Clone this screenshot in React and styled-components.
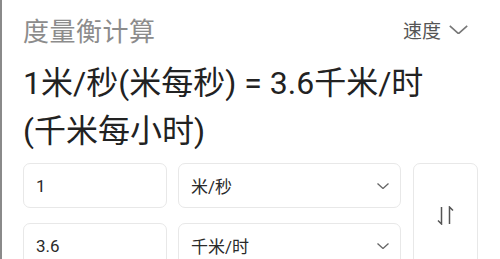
import React from "react";
import styled, { createGlobalStyle } from "styled-components";

const GlobalStyle = createGlobalStyle`
  html, body {
    margin: 0;
    padding: 0;
    background: #ffffff;
  }
  body {
    font-family: "Roboto", "Noto Sans CJK SC", sans-serif;
  }
`;

const Page = styled.div`
  min-height: 100vh;
  box-sizing: border-box;
  border-left: 2px solid #8a8a8a;
  padding: 0 22px 0 21px;
  overflow: hidden;
`;

const Header = styled.div`
  height: 59px;
  display: flex;
  align-items: center;
  justify-content: space-between;
`;

const Title = styled.h2`
  margin: 0;
  font-size: 26px;
  font-weight: 400;
  color: #8c8c8c;
  letter-spacing: 0.5px;
`;

const CategoryButton = styled.button`
  border: none;
  background: none;
  padding: 0;
  margin-right: 10px;
  display: flex;
  align-items: center;
  gap: 8px;
  font-family: inherit;
  font-size: 19px;
  color: #555;
`;

const Result = styled.h1`
  margin: 0;
  font-size: 32px;
  line-height: 48px;
  font-weight: 400;
  color: #222;
`;

const Form = styled.div`
  margin-top: 8px;
  display: grid;
  grid-template-columns: 144px 1fr 66px;
  grid-template-rows: 45px 45px;
  column-gap: 11px;
  row-gap: 15px;
`;

const Field = styled.div`
  box-sizing: border-box;
  border: 1px solid #e8e8e8;
  border-radius: 7px;
  display: flex;
  align-items: center;
  justify-content: space-between;
  padding: 0 11px 0 12px;
  font-size: 17px;
  color: #2a2a2a;
`;

const SwapButton = styled.button`
  grid-column: 3;
  grid-row: 1 / span 2;
  margin-left: 1px;
  border: 1px solid #e8e8e8;
  border-radius: 7px;
  background: #fff;
  display: flex;
  align-items: center;
  justify-content: center;
  padding: 0;
`;

const Chevron = ({ size = 12, color = "#666", width = 1.3 }) => (
  <svg width={size} height={size / 2} viewBox="0 0 12 6" fill="none">
    <path d="M0.5 0.5 L6 5.5 L11.5 0.5" stroke={color} strokeWidth={width} />
  </svg>
);

const SwapIcon = () => (
  <svg width="17" height="19" viewBox="0 0 17 19" fill="none">
    <path d="M4.5 1 V18 L1 14.5" stroke="#555" strokeWidth="1.5" />
    <path d="M12.5 18 V1 L16 4.5" stroke="#555" strokeWidth="1.5" />
  </svg>
);

const App = () => {
  return (
    <Page>
      <GlobalStyle />
      <Header>
        <Title>度量衡计算</Title>
        <CategoryButton>
          速度
          <Chevron size={19} color="#777" width={1} />
        </CategoryButton>
      </Header>
      <Result>
        1米/秒(米每秒) = 3.6千米/时
        <br />
        (千米每小时)
      </Result>
      <Form>
        <Field>1</Field>
        <Field>
          米/秒
          <Chevron />
        </Field>
        <SwapButton>
          <SwapIcon />
        </SwapButton>
        <Field>3.6</Field>
        <Field>
          千米/时
          <Chevron />
        </Field>
      </Form>
    </Page>
  );
};

export default App;
